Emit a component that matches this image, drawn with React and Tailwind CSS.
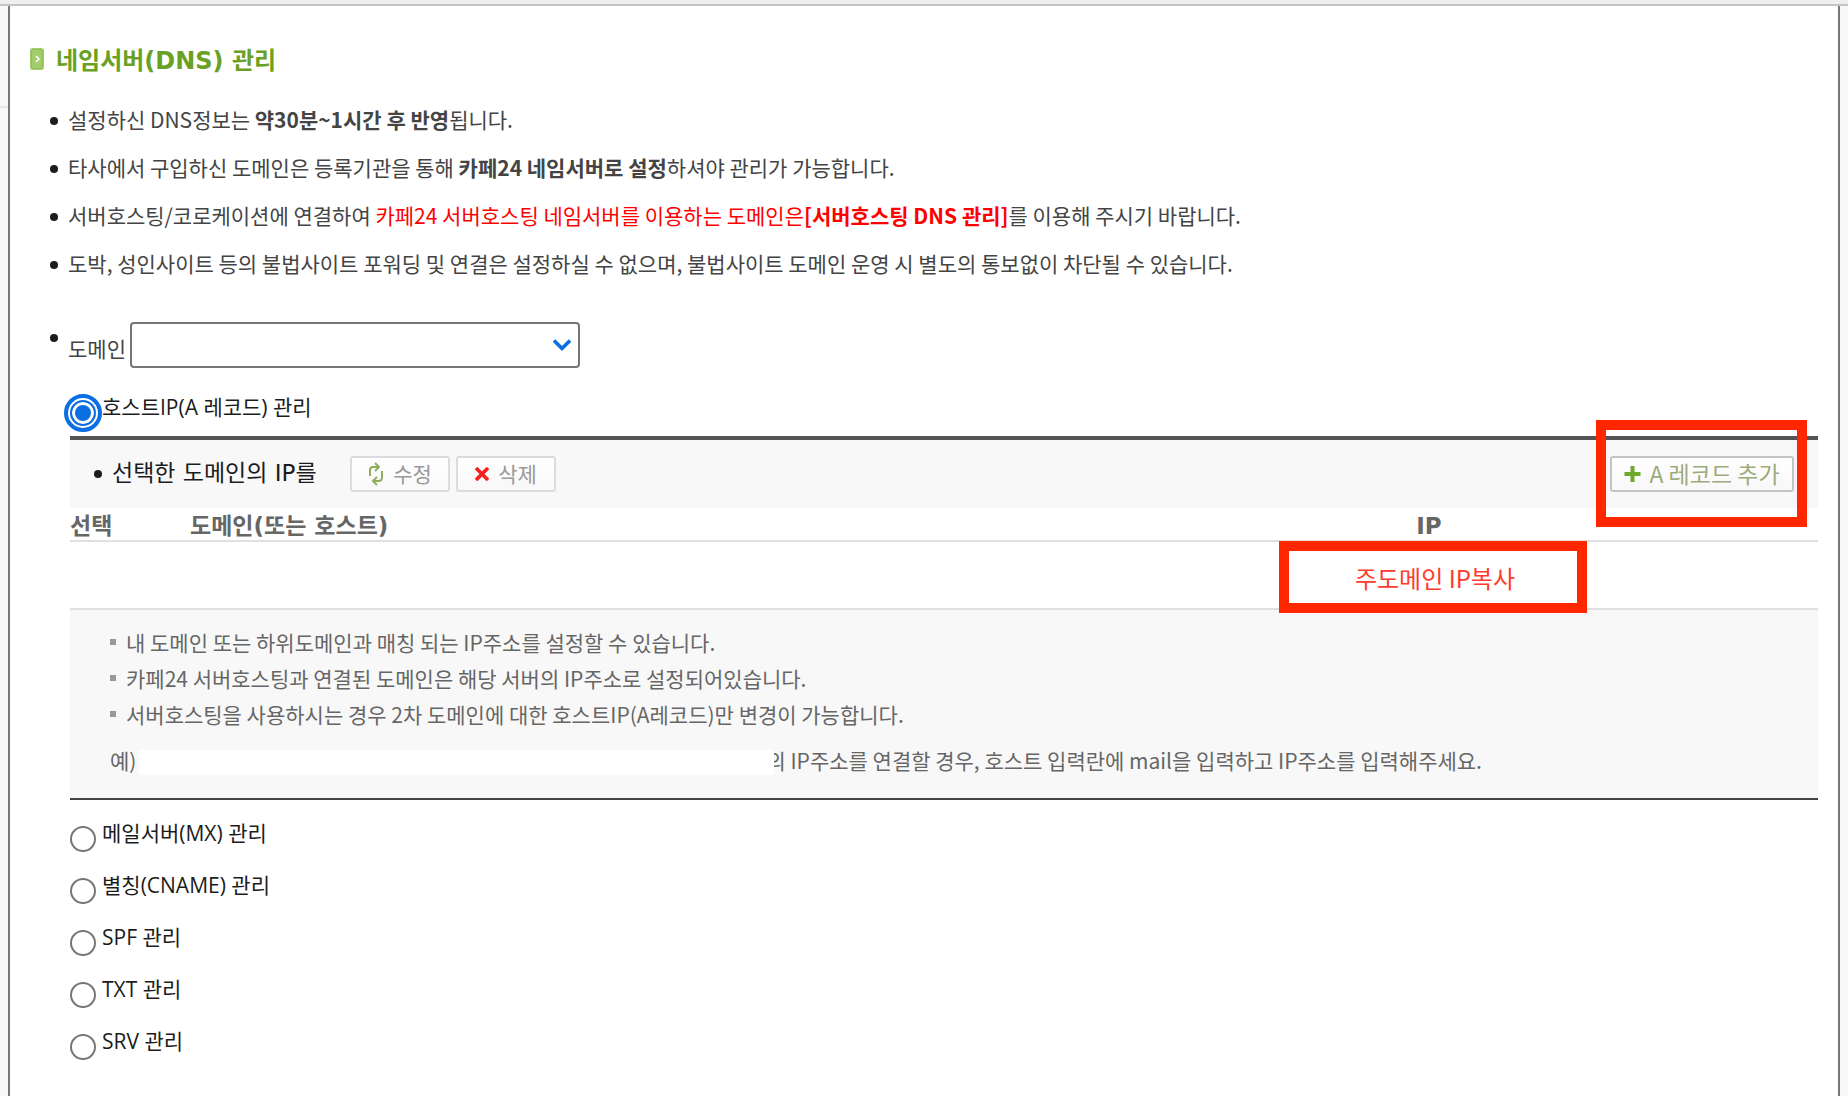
import { useState } from "react";

const records = [
    { id: "a", label: "호스트IP(A 레코드) 관리" },
    { id: "mx", label: "메일서버(MX) 관리" },
    { id: "cname", label: "별칭(CNAME) 관리" },
    { id: "spf", label: "SPF 관리" },
    { id: "txt", label: "TXT 관리" },
    { id: "srv", label: "SRV 관리" },
];

const notes = [
    "내 도메인 또는 하위도메인과 매칭 되는 IP주소를 설정할 수 있습니다.",
    "카페24 서버호스팅과 연결된 도메인은 해당 서버의 IP주소로 설정되어있습니다.",
    "서버호스팅을 사용하시는 경우 2차 도메인에 대한 호스트IP(A레코드)만 변경이 가능합니다.",
];

function Bullet(){
    return <span className="w-2 h-2 shrink-0 rounded-full bg-[#1c1c1c]"></span>;
}

function Guide({ children }){
    return (
        <li className="flex items-center gap-[10px] min-h-12">
            <Bullet />
            <p className="pb-1">{children}</p>
        </li>
    );
}

function RecordRadio({ record, selected, onSelect }){
    return (
        <div className="flex items-start gap-[6px] h-[52px]">
            <input
                type="radio"
                name="record"
                id={record.id}
                checked={selected === record.id}
                onChange={() => onSelect(record.id)}
                className="appearance-none w-[26px] h-[26px] mt-2 shrink-0 rounded-full border-2 border-[#767676] bg-white checked:border-[#0b6fe4] checked:bg-[#0b6fe4] checked:shadow-[inset_0_0_0_3px_#fff] checked:outline-4 checked:outline-offset-2 checked:outline-[#0b6fe4]"
            />
            <label htmlFor={record.id} className="text-[21px] leading-[30px] text-[#1c1c1c] font-['Open_Sans','Noto_Sans_CJK_KR',sans-serif]">{record.label}</label>
        </div>
    );
}

function ToolButton({ icon, className, children }){
    return (
        <button className={`flex items-center justify-center gap-2 h-9 rounded-[3px] border-2 bg-linear-to-b from-white to-[#f8f8f8] leading-8 whitespace-nowrap ${className}`}>
            {icon}
            <span className="pb-[2px]">{children}</span>
        </button>
    );
}

export default function App(){
    const [selected, setSelected] = useState("a");
    const [domain, setDomain] = useState("");

    return (
        <div className="min-h-screen flex flex-col bg-[#f8f8f8] font-['Noto_Sans_CJK_KR',sans-serif] text-[#444]">
            <div className="h-[6px] bg-[#efefef] border-b-2 border-[#c4c4c4]"></div>
            <div className="grow flex">
                <div className="w-2 shrink-0">
                    <div className="h-[102px] border-b-2 border-[#e8e8e8]"></div>
                </div>
                <main className="grow border-x-2 border-[#777] bg-white pl-5 pr-5">
                    {/* タイトル */}
                    <h1 className="flex items-center gap-3 mt-8 h-[46px] text-[24px] leading-8 font-bold text-[#6aa124] font-['DejaVu_Sans','Noto_Sans_CJK_KR',sans-serif]">
                        <svg width="14" height="22" viewBox="0 0 14 22" className="shrink-0 self-start mt-[10px]">
                            <rect width="14" height="22" rx="3" fill="#a3cc6c" />
                            <rect x="1.5" y="1.5" width="11" height="19" rx="2" fill="none" stroke="#7fb53c" strokeDasharray="1 1" />
                            <path d="M6 8l3 3-3 3" fill="none" stroke="#fff" strokeWidth="1.6" />
                        </svg>
                        네임서버(DNS) 관리
                    </h1>

                    {/* 案内文 */}
                    <ul className="pl-5 mt-[13px] text-[21px] leading-8">
                        <Guide>설정하신 DNS정보는 <b>약30분~1시간 후 반영</b>됩니다.</Guide>
                        <Guide>타사에서 구입하신 도메인은 등록기관을 통해 <b>카페24 네임서버로 설정</b>하셔야 관리가 가능합니다.</Guide>
                        <Guide>
                            서버호스팅/코로케이션에 연결하여 <span className="text-[#f00]">카페24 서버호스팅 네임서버를 이용하는 도메인은<a href="#dns" className="font-bold">[서버호스팅 DNS 관리]</a></span>를 이용해 주시기 바랍니다.
                        </Guide>
                        <Guide>도박, 성인사이트 등의 불법사이트 포워딩 및 연결은 설정하실 수 없으며, 불법사이트 도메인 운영 시 별도의 통보없이 차단될 수 있습니다.</Guide>
                    </ul>

                    {/* ドメイン選択 */}
                    <div className="flex items-start gap-[10px] pl-5 mt-[33px]">
                        <span className="flex items-center h-8"><Bullet /></span>
                        <label htmlFor="domain" className="text-[21px] leading-8 pt-[10px]">도메인</label>
                        <div className="relative -ml-[6px]">
                            <select
                                id="domain"
                                value={domain}
                                onChange={(e) => setDomain(e.target.value)}
                                className="appearance-none w-[450px] h-[46px] px-3 rounded border-2 border-[#767676] bg-white"
                            >
                                <option value=""></option>
                            </select>
                            <svg width="20" height="14" viewBox="0 0 20 14" className="absolute right-2 top-4 pointer-events-none">
                                <path d="M2 2.5l8 8 8-8" fill="none" stroke="#0b6fe4" strokeWidth="3.6" />
                            </svg>
                        </div>
                    </div>

                    <div className="pl-10 mt-6">
                        <RecordRadio record={records[0]} selected={selected} onSelect={setSelected} />
                    </div>

                    {/* Aレコード */}
                    <section className="ml-10 -mt-2 border-t-4 border-[#555]">
                        <div className="flex items-center h-[68px] bg-[#f8f8f8] pl-6 pr-6">
                            <Bullet />
                            <p className="pl-[10px] pb-[2px] text-[23px] leading-8 text-[#1c1c1c] font-['DejaVu_Sans','Noto_Sans_CJK_KR',sans-serif]">선택한 도메인의 IP를</p>
                            <div className="flex gap-[6px] ml-[33px]">
                                <ToolButton
                                    className="w-[100px] border-[#dcdcdc] text-[21px] text-[#999]"
                                    icon={
                                        <svg width="18" height="24" viewBox="0 0 18 24" fill="none" stroke="#8fae5c" strokeWidth="2">
                                            <path d="M3 14V8q0-3 3-3h5M8 1l4 4-4 4" />
                                            <path d="M15 9v6q0 4-3 4H7M10 15l-4 4 4 4" />
                                        </svg>
                                    }
                                >
                                    수정
                                </ToolButton>
                                <ToolButton
                                    className="w-[100px] border-[#dcdcdc] text-[21px] text-[#999]"
                                    icon={
                                        <svg width="16" height="14" viewBox="0 0 16 14">
                                            <path d="M2 1l12 12M14 1L2 13" stroke="#f5201c" strokeWidth="3.6" />
                                        </svg>
                                    }
                                >
                                    삭제
                                </ToolButton>
                            </div>
                            <div className="relative ml-auto">
                                <ToolButton
                                    className="w-[184px] border-[#c4c4c4] text-[23px] text-[#9dab7c]"
                                    icon={
                                        <svg width="17" height="18" viewBox="0 0 17 18">
                                            <path d="M8.5 1v16M0.5 9h16" stroke="#6fa82b" strokeWidth="4" />
                                        </svg>
                                    }
                                >
                                    A 레코드 추가
                                </ToolButton>
                                <span className="absolute -left-[14px] -right-[13px] -top-9 -bottom-[35px] border-[10px] border-[#ff2600] pointer-events-none"></span>
                            </div>
                        </div>

                        <table className="w-full table-fixed border-separate border-spacing-0">
                            <thead className="text-[23px] leading-7 text-[#666] text-left font-['DejaVu_Sans','Noto_Sans_CJK_KR',sans-serif]">
                                <tr>
                                    <th className="w-[120px] p-0 pt-1 border-b-2 border-[#e0e0e0]">선택</th>
                                    <th className="p-0 pt-1 border-b-2 border-[#e0e0e0]">도메인(또는 호스트)</th>
                                    <th className="w-[308px] p-0 pt-1 pr-2 border-b-2 border-[#e0e0e0] text-center">IP</th>
                                    <th className="w-[231px] p-0 border-b-2 border-[#e0e0e0]"></th>
                                </tr>
                            </thead>
                            <tbody>
                                <tr className="h-[68px]">
                                    <td className="border-b-2 border-[#e0e0e0]"></td>
                                    <td className="border-b-2 border-[#e0e0e0]"></td>
                                    <td className="relative p-0 pt-[6px] pl-1 border-b-2 border-[#e0e0e0] text-center text-[24px] leading-8 text-[#ff3b30]">
                                        주도메인 IP복사
                                        <span className="absolute inset-x-0 -top-px -bottom-[5px] border-[10px] border-[#ff2600] pointer-events-none"></span>
                                    </td>
                                    <td className="border-b-2 border-[#e0e0e0]"></td>
                                </tr>
                            </tbody>
                        </table>

                        <div className="h-[190px] bg-[#f8f8f8] border-b-2 border-[#444] pl-10 pt-[14px] text-[21px] leading-9 text-[#666]">
                            <ul>
                                {notes.map((note) => (
                                    <li key={note} className="flex items-center gap-[10px]">
                                        <span className="w-[6px] h-[6px] shrink-0 bg-[#999]"></span>
                                        {note}
                                    </li>
                                ))}
                            </ul>
                            <p className="flex items-center mt-[10px]">
                                예)
                                <span className="relative w-[635px] h-[25px] mt-1 ml-[3px] shrink-0 bg-white"></span>
                                <span className="-ml-2">의 IP주소를 연결할 경우, 호스트 입력란에 mail을 입력하고 IP주소를 입력해주세요.</span>
                            </p>
                        </div>
                    </section>

                    <div className="pl-10 mt-[18px]">
                        {records.slice(1).map((record) => (
                            <RecordRadio key={record.id} record={record} selected={selected} onSelect={setSelected} />
                        ))}
                    </div>
                </main>
                <div className="w-2 shrink-0"></div>
            </div>
        </div>
    );
}
